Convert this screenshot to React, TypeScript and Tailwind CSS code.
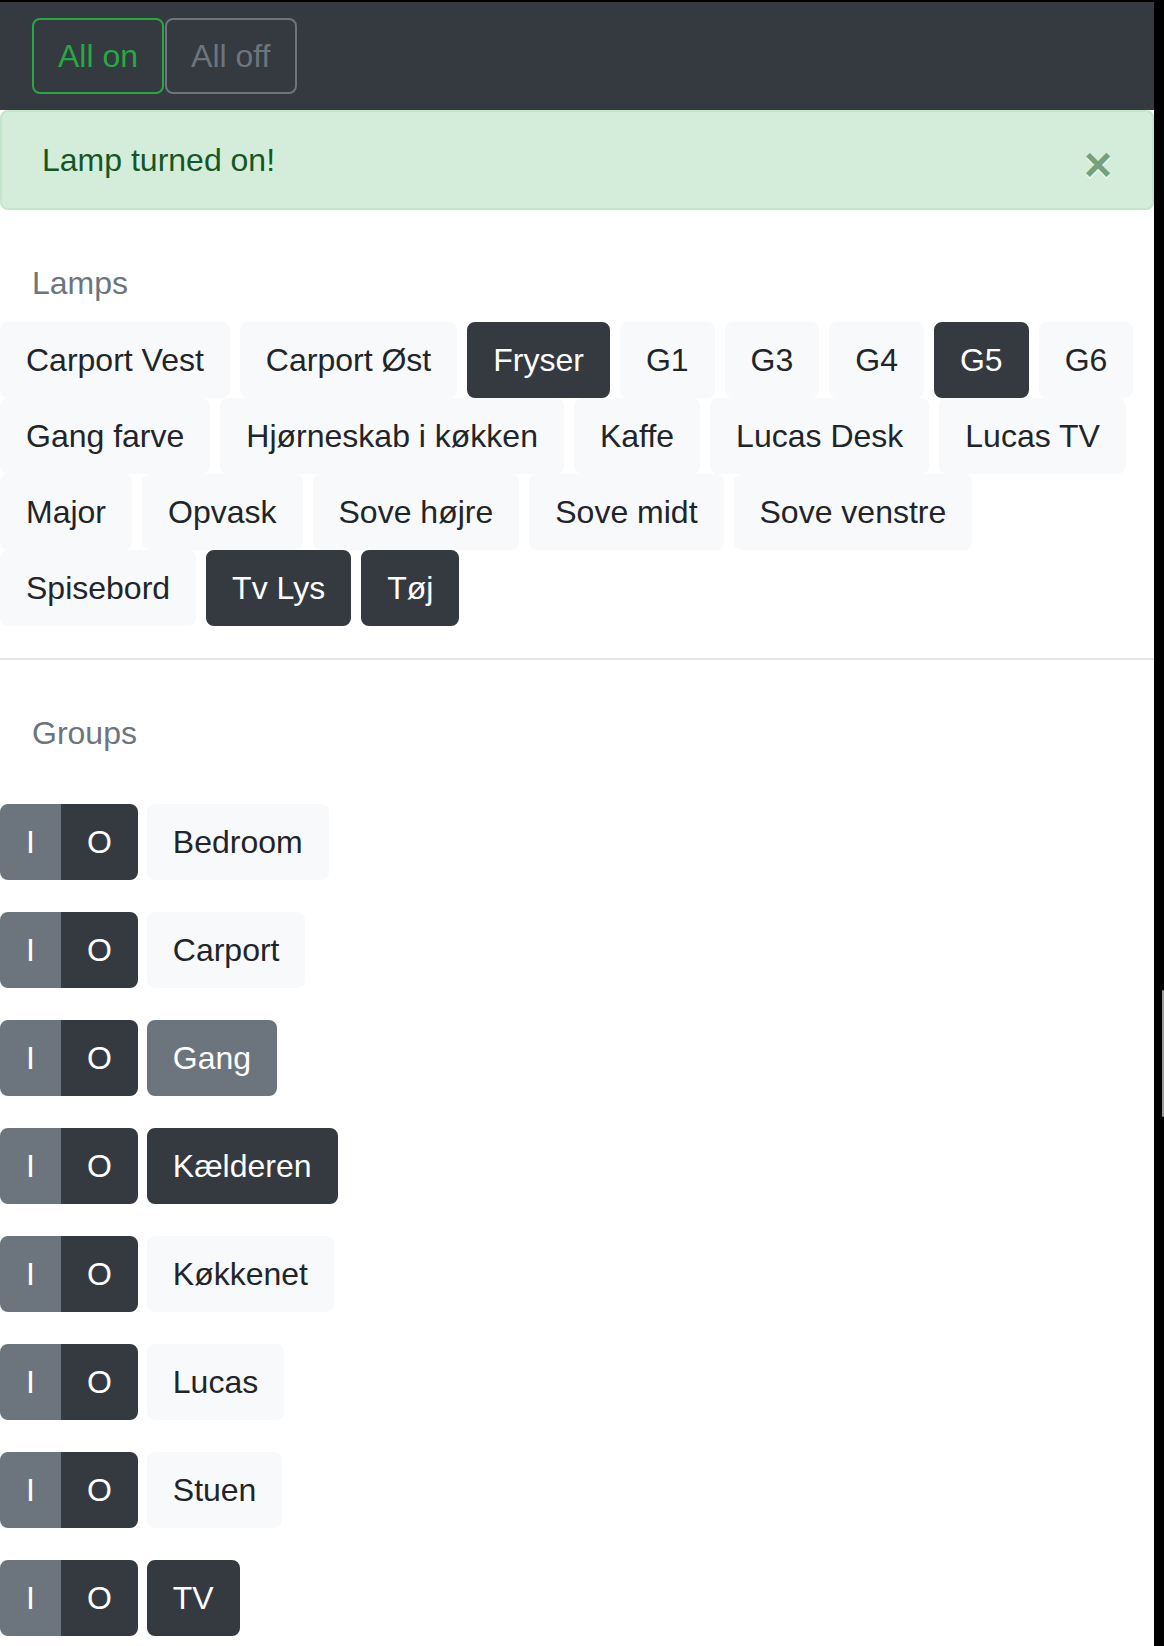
import React from "react";

type Tone = "light" | "dark" | "secondary";

const LAMPS: { name: string; on: boolean }[] = [
  { name: "Carport Vest", on: false },
  { name: "Carport Øst", on: false },
  { name: "Fryser", on: true },
  { name: "G1", on: false },
  { name: "G3", on: false },
  { name: "G4", on: false },
  { name: "G5", on: true },
  { name: "G6", on: false },
  { name: "Gang farve", on: false },
  { name: "Hjørneskab i køkken", on: false },
  { name: "Kaffe", on: false },
  { name: "Lucas Desk", on: false },
  { name: "Lucas TV", on: false },
  { name: "Major", on: false },
  { name: "Opvask", on: false },
  { name: "Sove højre", on: false },
  { name: "Sove midt", on: false },
  { name: "Sove venstre", on: false },
  { name: "Spisebord", on: false },
  { name: "Tv Lys", on: true },
  { name: "Tøj", on: true },
];

const GROUPS: { name: string; tone: Tone }[] = [
  { name: "Bedroom", tone: "light" },
  { name: "Carport", tone: "light" },
  { name: "Gang", tone: "secondary" },
  { name: "Kælderen", tone: "dark" },
  { name: "Køkkenet", tone: "light" },
  { name: "Lucas", tone: "light" },
  { name: "Stuen", tone: "light" },
  { name: "TV", tone: "dark" },
];

const TONES: Record<Tone, string> = {
  light: "bg-[#f8f9fa] border-[#f8f9fa] text-[#212529]",
  dark: "bg-[#343a40] border-[#343a40] text-white",
  secondary: "bg-[#6c757d] border-[#6c757d] text-white",
};

const BTN = "border-2 px-6 py-3 text-[32px] leading-[48px] whitespace-nowrap cursor-default";

function Label({ children }: { children: React.ReactNode }) {
  return (
    <div className="pl-8 pt-[17px] pb-[15px] text-[32px] leading-[48px] text-[#6c757d]">
      {children}
    </div>
  );
}

export default function App() {
  return (
    <div className="flex min-h-screen bg-black font-['Liberation_Sans',Arial,sans-serif]">
      <div className="w-[1154px] shrink-0 mt-[2px] bg-white">
        {/* Navbar */}
        <div className="flex gap-px bg-[#343a40] px-8 py-4">
          <button className={`${BTN} rounded-lg border-[#28a745] text-[#28a745]`}>All on</button>
          <button className={`${BTN} rounded-lg border-[#6c757d] text-[#6c757d]`}>All off</button>
        </div>

        {/* Alert */}
        <div className="mb-8 flex items-center justify-between rounded-lg border-2 border-[#c3e6cb] bg-[#d4edda] px-10 py-6 text-[32px] leading-[48px] text-[#155724]">
          <span>Lamp turned on!</span>
          <span className="translate-y-[5px] text-[48px] font-bold leading-[48px] opacity-50 [text-shadow:0_2px_0_#fff]">
            ×
          </span>
        </div>

        {/* Lamps */}
        <Label>Lamps</Label>
        <div className="flex flex-wrap gap-x-[10px]">
          {LAMPS.map((l) => (
            <button key={l.name} className={`${BTN} rounded-lg ${TONES[l.on ? "dark" : "light"]}`}>
              {l.name}
            </button>
          ))}
        </div>

        <hr className="my-8 border-t-2 border-[#e6e6e6]" />

        {/* Groups */}
        <Label>Groups</Label>
        <div className="flex flex-col gap-8 pt-8">
          {GROUPS.map((g) => (
            <div key={g.name} className="flex gap-[9px]">
              <div className="flex">
                <button className={`${BTN} rounded-l-lg ${TONES.secondary}`}>I</button>
                <button className={`${BTN} rounded-r-lg ${TONES.dark}`}>O</button>
              </div>
              <button className={`${BTN} rounded-lg ${TONES[g.tone]}`}>{g.name}</button>
            </div>
          ))}
        </div>
      </div>

      {/* window edge + scrollbar thumb */}
      <div className="flex flex-1 flex-col items-end">
        <div className="mt-[990px] h-[127px] w-[2px] rounded-full bg-[#9b9b9b]" />
      </div>
    </div>
  );
}
